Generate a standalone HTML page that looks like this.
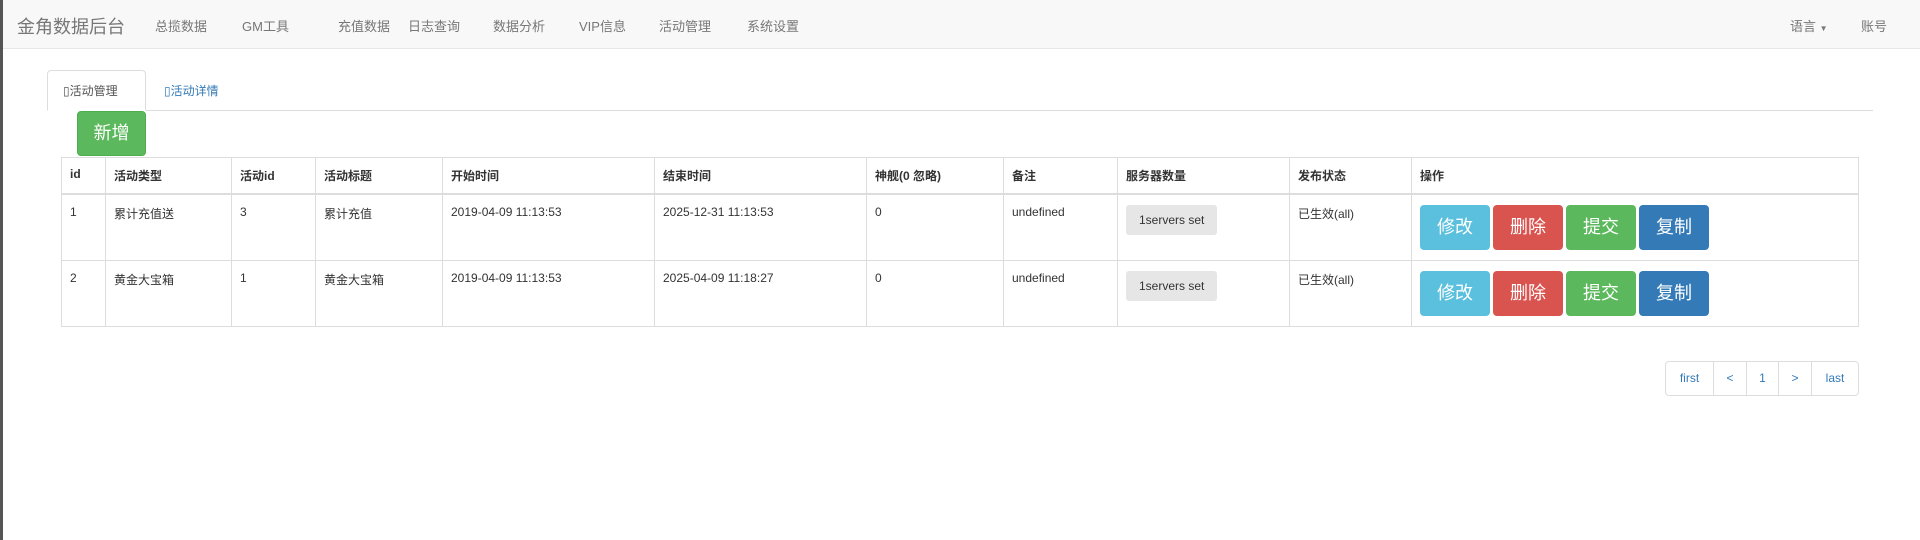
<!DOCTYPE html>
<html><head><meta charset="utf-8"><style>
*{box-sizing:border-box}
body{margin:0;width:1920px;height:540px;background:#fff;font-family:"Liberation Sans","Noto Sans CJK SC",sans-serif;font-size:13px;color:#333;position:relative;overflow:hidden}
.lb{position:absolute;left:0;top:0;width:3px;height:540px;background:#555;z-index:5}
.nav{position:absolute;left:0;top:0;width:1920px;height:49px;background:#f8f8f8;border-bottom:1px solid #e7e7e7}
.nav span{position:absolute;top:16px;font-size:13px;color:#777}
.brand{font-size:18px!important;top:13px!important;color:#777}
.tab1{position:absolute;left:47px;top:70px;width:99px;height:41px;border:1px solid #ddd;border-bottom-color:#fff;border-radius:4px 4px 0 0;background:#fff;font-size:12px;padding:11px 0 0 15px;color:#555}
.tab2{position:absolute;left:164px;top:82px;font-size:12px;color:#337ab7}
.tabline{position:absolute;left:47px;top:110px;width:1826px;border-top:1px solid #ddd}
.add{position:absolute;left:77px;top:111px;width:69px;height:45px;background:#5cb85c;border:1px solid #4cae4c;border-radius:4px;color:#fff;font-size:18px;text-align:center;line-height:43px}
table{position:absolute;left:61px;top:157px;width:1798px;border-collapse:collapse;border:1px solid #ddd}
td,th{border:1px solid #ddd;vertical-align:top;text-align:left;padding:10px 8px;font-size:12px}
th{height:36px;border-bottom:2px solid #ddd;font-weight:bold;padding:9px 8px 0}
td{height:64px}
.b{display:inline-block;width:70px;height:45px;border-radius:4px;color:#fff;font-size:18px;text-align:center;line-height:45px;margin-right:3px;vertical-align:top}
.sv{display:inline-block;background:#e6e6e6;border-radius:3px;padding:8px 13px;margin-top:0px}
.pg{position:absolute;left:1665px;top:361px;height:35px;display:flex;border:1px solid #ddd;border-radius:4px}
.pg div{border-left:1px solid #ddd;color:#337ab7;line-height:33px;text-align:center;font-size:12px}
.pg div:first-child{border-left:none}
</style></head><body>
<div class="lb"></div>
<div class="nav">
<span class="brand" style="left:17px">金角数据后台</span>
<span style="left:155px">总揽数据</span><span style="left:242px">GM工具</span><span style="left:338px">充值数据</span><span style="left:408px">日志查询</span><span style="left:493px">数据分析</span><span style="left:579px">VIP信息</span><span style="left:659px">活动管理</span><span style="left:747px">系统设置</span>
<span style="left:1790px">语言 <small style="font-size:8px">▼</small></span><span style="left:1861px">账号</span>
</div>
<div class="tabline"></div>
<div class="tab1">▯活动管理</div>
<div class="tab2">▯活动详情</div>
<div class="add">新增</div>
<table>
<tr><th style="width:44px">id</th><th style="width:126px">活动类型</th><th style="width:84px">活动id</th><th style="width:127px">活动标题</th><th style="width:212px">开始时间</th><th style="width:212px">结束时间</th><th style="width:137px">神舰(0 忽略)</th><th style="width:114px">备注</th><th style="width:172px">服务器数量</th><th style="width:122px">发布状态</th><th>操作</th></tr>
<tr><td>1</td><td>累计充值送</td><td>3</td><td>累计充值</td><td>2019-04-09 11:13:53</td><td>2025-12-31 11:13:53</td><td>0</td><td>undefined</td><td><span class="sv">1servers set</span></td><td>已生效(all)</td><td style="padding-top:10px"><span class="b" style="background:#5bc0de">修改</span><span class="b" style="background:#d9534f">删除</span><span class="b" style="background:#5cb85c">提交</span><span class="b" style="background:#337ab7">复制</span></td></tr>
<tr><td>2</td><td>黄金大宝箱</td><td>1</td><td>黄金大宝箱</td><td>2019-04-09 11:13:53</td><td>2025-04-09 11:18:27</td><td>0</td><td>undefined</td><td><span class="sv">1servers set</span></td><td>已生效(all)</td><td style="padding-top:10px"><span class="b" style="background:#5bc0de">修改</span><span class="b" style="background:#d9534f">删除</span><span class="b" style="background:#5cb85c">提交</span><span class="b" style="background:#337ab7">复制</span></td></tr>
</table>
<div class="pg"><div style="width:47px">first</div><div style="width:33px">&lt;</div><div style="width:32px">1</div><div style="width:33px">&gt;</div><div style="width:47px">last</div></div>
</body></html>
